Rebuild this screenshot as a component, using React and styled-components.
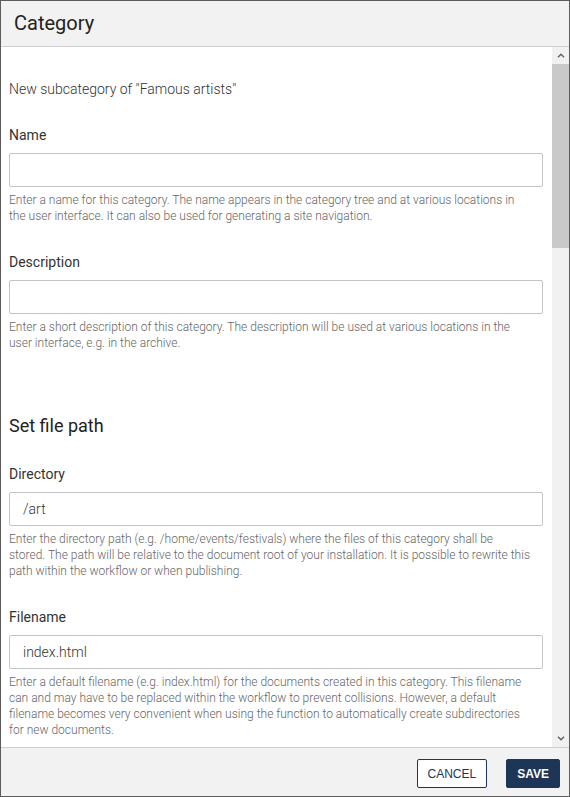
import React from "react";
import styled, { createGlobalStyle } from "styled-components";

// 전역 스타일
const GlobalStyle = createGlobalStyle`
  html, body {
    margin: 0;
    padding: 0;
    background: #fff;
  }
  * {
    box-sizing: border-box;
  }
`;

const fields = [
  {
    label: "Name",
    value: "",
    help:
      "Enter a name for this category. The name appears in the category tree and at various locations in the user interface. It can also be used for generating a site navigation.",
  },
  {
    label: "Description",
    value: "",
    help:
      "Enter a short description of this category. The description will be used at various locations in the user interface, e.g. in the archive.",
  },
];

const pathFields = [
  {
    label: "Directory",
    value: "/art",
    help:
      "Enter the directory path (e.g. /home/events/festivals) where the files of this category shall be stored. The path will be relative to the document root of your installation. It is possible to rewrite this path within the workflow or when publishing.",
  },
  {
    label: "Filename",
    value: "index.html",
    help:
      "Enter a default filename (e.g. index.html) for the documents created in this category. This filename can and may have to be replaced within the workflow to prevent collisions. However, a default filename becomes very convenient when using the function to automatically create subdirectories for new documents.",
  },
];

const Chevron = ({ up }) => (
  <svg width="8" height="5" viewBox="0 0 8 5">
    <path
      d={up ? "M1 4.2 L4 1.2 L7 4.2" : "M1 0.8 L4 3.8 L7 0.8"}
      fill="none"
      stroke="#606060"
      strokeWidth="1.4"
    />
  </svg>
);

const Field = ({ label, value, help }) => (
  <FieldGroup>
    <Label>{label}</Label>
    <Input defaultValue={value} />
    <Help>{help}</Help>
  </FieldGroup>
);

const App = () => (
  <>
    <GlobalStyle />
    <Dialog>
      <Header>
        <Title>Category</Title>
      </Header>
      <Body>
        <Content>
          <Intro>New subcategory of "Famous artists"</Intro>
          {fields.map((f) => (
            <Field key={f.label} {...f} />
          ))}
          <SectionTitle>Set file path</SectionTitle>
          {pathFields.map((f) => (
            <Field key={f.label} {...f} />
          ))}
        </Content>
        <Scrollbar>
          <ArrowBox>
            <Chevron up />
          </ArrowBox>
          <Track>
            <Thumb />
          </Track>
          <ArrowBox>
            <Chevron />
          </ArrowBox>
        </Scrollbar>
      </Body>
      <Footer>
        <Button>CANCEL</Button>
        <Button $primary>SAVE</Button>
      </Footer>
    </Dialog>
  </>
);

// 스타일링
const Dialog = styled.div`
  width: 570px;
  height: 797px;
  border: 1px solid #5c5c5c;
  display: flex;
  flex-direction: column;
  font-family: Roboto, "Liberation Sans", sans-serif;
  font-weight: 300;
  color: #333;
  overflow: hidden;
`;

const Header = styled.div`
  height: 46px;
  flex-shrink: 0;
  background: #f2f2f2;
  border-bottom: 1px solid #cfcfcf;
  display: flex;
  align-items: center;
  padding: 0 13px 2px;
`;

const Title = styled.h1`
  margin: 0;
  font-size: 20px;
  font-weight: 400;
  color: #222;
`;

const Body = styled.div`
  height: 700px;
  flex-shrink: 0;
  display: flex;
  background: #fff;
`;

const Content = styled.div`
  flex: 1;
  overflow: hidden;
  padding: 32px 9px 0 8px;
`;

const Intro = styled.p`
  margin: 0 0 26px;
  font-size: 14px;
  line-height: 20px;
  color: #333;
`;

const SectionTitle = styled.h2`
  margin: 63px 0 26px;
  font-size: 18px;
  font-weight: 400;
  line-height: 24px;
  color: #222;
`;

const FieldGroup = styled.div`
  margin-bottom: 28px;
`;

const Label = styled.label`
  display: block;
  font-size: 14px;
  font-weight: 400;
  line-height: 20px;
  color: #333;
  margin-bottom: 8px;
`;

const Input = styled.input`
  display: block;
  width: 100%;
  height: 34px;
  border: 1px solid #c4c4c4;
  border-radius: 2px;
  padding: 0 13px;
  font-family: Roboto, "Liberation Sans", sans-serif;
  font-size: 14px;
  font-weight: 300;
  color: #333;
  outline: none;
`;

const Help = styled.div`
  margin-top: 5px;
  padding-right: 12px;
  font-size: 12px;
  line-height: 16px;
  color: #666;
`;

const Scrollbar = styled.div`
  width: 17px;
  flex-shrink: 0;
  display: flex;
  flex-direction: column;
  background: #f1f1f1;
`;

const ArrowBox = styled.div`
  height: 17px;
  display: flex;
  align-items: center;
  justify-content: center;
`;

const Track = styled.div`
  flex: 1;
`;

const Thumb = styled.div`
  height: 184px;
  background: #c9c9c9;
`;

const Footer = styled.div`
  flex: 1;
  background: #f2f2f2;
  border-top: 1px solid #cfcfcf;
  display: flex;
  justify-content: flex-end;
  align-items: flex-start;
  gap: 19px;
  padding: 11px 9px 0 0;
`;

const Button = styled.button`
  height: 29px;
  padding: 0 10px;
  border-radius: 2px;
  border: 1px solid #1d3557;
  background: ${(p) => (p.$primary ? "#1d3557" : "#fff")};
  color: ${(p) => (p.$primary ? "#fff" : "#1d3557")};
  font-family: "Liberation Sans", Arial, sans-serif;
  font-size: 12px;
  font-weight: ${(p) => (p.$primary ? 700 : 400)};
  cursor: pointer;
`;

export default App;
